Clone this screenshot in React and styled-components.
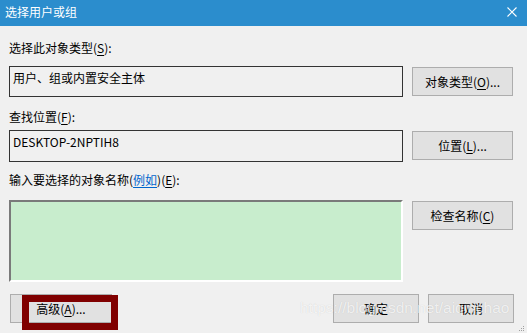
import React from "react";
import styled, { createGlobalStyle } from "styled-components";

const GlobalStyle = createGlobalStyle`
  html, body {
    margin: 0;
    padding: 0;
    background: #f0f0f0;
  }
  body {
    font-family: "Noto Sans CJK SC", "Liberation Sans", sans-serif;
    font-size: 12px;
    color: #000;
  }
`;

const App = () => {
  return (
    <Window>
      <GlobalStyle />
      <TitleBar>
        <Title>选择用户或组</Title>
        <CloseIcon viewBox="0 0 10 10">
          <path d="M0.5 0.5 L9.5 9.5 M9.5 0.5 L0.5 9.5" />
        </CloseIcon>
      </TitleBar>

      <Body>
        <Label $top={14}>
          选择此对象类型(<u>S</u>):
        </Label>
        <Row $gap={10}>
          <Field>用户、组或内置安全主体</Field>
          <Button $offset={1}>
            对象类型(<u>O</u>)...
          </Button>
        </Row>

        <Label $top={12}>
          查找位置(<u>F</u>):
        </Label>
        <Row $gap={5}>
          <Field $tall>DESKTOP-2NPTIH8</Field>
          <Button $offset={1}>
            位置(<u>L</u>)...
          </Button>
        </Row>

        <Label $top={10}>
          输入要选择的对象名称(<Link>例如</Link>)(<u>E</u>):
        </Label>
        <Row $gap={12}>
          <NameInput />
          <Button $offset={1}>
            检查名称(<u>C</u>)
          </Button>
        </Row>

        <Footer>
          <Button $wide>
            高级(<u>A</u>)...
            <Highlight />
          </Button>
          <FooterRight>
            <Button $small>确定</Button>
            <Button $small>取消</Button>
          </FooterRight>
        </Footer>
      </Body>

      <Watermark>https://blog.csdn.net/aiqinchao</Watermark>
      <Grip viewBox="0 0 6 6">
        <rect x="4" y="0" width="1" height="1" />
        <rect x="2" y="2" width="1" height="1" />
        <rect x="4" y="2" width="1" height="1" />
        <rect x="0" y="4" width="1" height="1" />
        <rect x="2" y="4" width="1" height="1" />
        <rect x="4" y="4" width="1" height="1" />
      </Grip>
    </Window>
  );
};

const Window = styled.div`
  position: relative;
  width: 527px;
  height: 333px;
  overflow: hidden;
  background: #f0f0f0;
`;

const TitleBar = styled.div`
  height: 26px;
  background: #2b8dcd;
  display: flex;
  align-items: center;
  justify-content: space-between;
  padding: 0 10px 0 5px;
  color: #fff;
`;

const Title = styled.span`
  font-size: 12px;
  line-height: 16px;
  margin-top: -2px;
`;

const CloseIcon = styled.svg`
  width: 10px;
  height: 10px;
  margin-top: -3px;
  stroke: #fff;
  stroke-width: 1.1;
  fill: none;
`;

const Body = styled.div`
  padding: 0 13px 0 9px;
`;

const Label = styled.div`
  margin-top: ${(p) => p.$top}px;
  line-height: 16px;
  height: 16px;

  u {
    text-decoration-thickness: 1px;
    text-underline-offset: 2px;
  }
`;

const Link = styled.span`
  color: #0066cc;
  text-decoration: underline;
  text-underline-offset: 2px;
`;

const Row = styled.div`
  margin-top: ${(p) => p.$gap}px;
  display: grid;
  grid-template-columns: 394px 101px;
  column-gap: 9px;
  align-items: start;
`;

const Field = styled.div`
  box-sizing: border-box;
  height: ${(p) => (p.$tall ? 32 : 31)}px;
  border: 1px solid #333;
  padding: 3px 3px 0;
  line-height: 16px;
`;

const NameInput = styled.div`
  box-sizing: border-box;
  height: 82px;
  background: #c8edcd;
  border-style: solid;
  border-width: 2px;
  border-color: #7a7a7a #fff #fff #7a7a7a;
`;

const Button = styled.div`
  position: relative;
  box-sizing: border-box;
  margin-top: ${(p) => p.$offset || 0}px;
  width: ${(p) => (p.$wide ? 102 : p.$small ? 86 : 101)}px;
  height: 29px;
  border: 1px solid #adadad;
  background: #e1e1e1;
  display: flex;
  align-items: center;
  justify-content: center;
  line-height: 16px;
  white-space: nowrap;

  u {
    text-underline-offset: 2px;
  }
`;

const Highlight = styled.div`
  position: absolute;
  left: 11px;
  top: 0;
  width: 96px;
  height: 35px;
  box-sizing: border-box;
  border: 7px solid #800000;
`;

const Footer = styled.div`
  margin-top: 12px;
  padding-left: 1px;
  display: flex;
  justify-content: space-between;
`;

const FooterRight = styled.div`
  display: flex;
  gap: 9px;
`;

const Watermark = styled.div`
  position: absolute;
  left: 300px;
  top: 299px;
  font-family: "Liberation Sans", Arial, sans-serif;
  font-size: 15.5px;
  line-height: 18px;
  color: rgba(255, 255, 255, 0.75);
  text-shadow: 0 0 1px rgba(0, 0, 0, 0.15);
  pointer-events: none;
  white-space: nowrap;
`;

const Grip = styled.svg`
  position: absolute;
  right: 2px;
  bottom: 1px;
  width: 6px;
  height: 6px;
  fill: #a0a0a0;
`;

export default App;
